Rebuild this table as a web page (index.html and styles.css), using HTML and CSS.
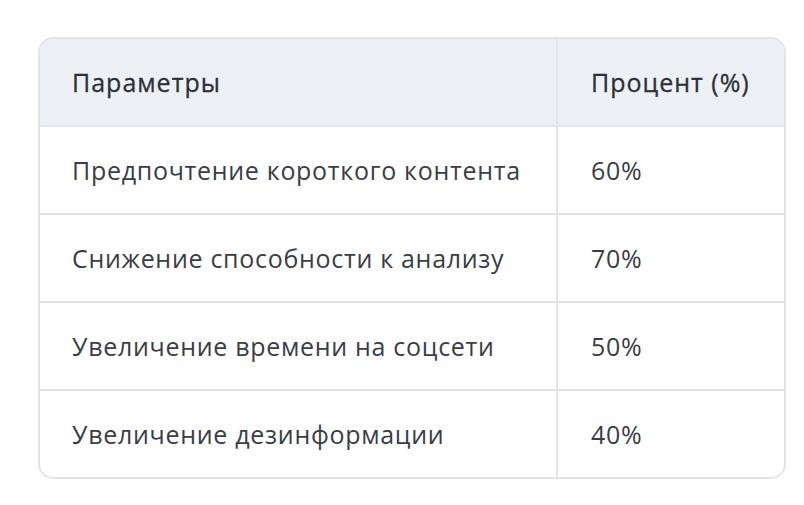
FILE: index.html
```html
<!DOCTYPE html>
<html lang="ru">
<head>
<meta charset="utf-8">
<link rel="stylesheet" href="styles.css">
</head>
<body>
<div class="wrap">
  <table class="tbl">
    <thead>
      <tr><th class="c1">Параметры</th><th class="c2">Процент (%)</th></tr>
    </thead>
    <tbody>
      <tr><td class="c1">Предпочтение короткого контента</td><td class="c2">60%</td></tr>
      <tr><td class="c1">Снижение способности к анализу</td><td class="c2">70%</td></tr>
      <tr><td class="c1">Увеличение времени на соцсети</td><td class="c2">50%</td></tr>
      <tr><td class="c1">Увеличение дезинформации</td><td class="c2">40%</td></tr>
    </tbody>
  </table>
</div>
</body>
</html>
```
FILE: styles.css
```css
html, body { margin: 0; padding: 0; background: #ffffff; }
body { font-family: "Open Sans", "Noto Sans", sans-serif; color: #3a3d44; }
.wrap { padding: 37px 19px 0 38px; }
.tbl {
  width: 748px;
  border-collapse: separate;
  border-spacing: 0;
  border: 2px solid #e1e5ea;
  border-radius: 15px;
  overflow: hidden;
  font-size: 25px;
  letter-spacing: 0.7px;
}
.tbl th, .tbl td {
  height: 88px;
  padding: 0 0 0 32px;
  text-align: left;
  vertical-align: middle;
  box-sizing: border-box;
}
.tbl th {
  height: 86px;
  background: #edf0f5;
  font-weight: 500;
  letter-spacing: 1px;
  color: #2c3037;
  -webkit-text-stroke: 0.3px #2c3037;
}
.tbl td { font-weight: 400; border-top: 2px solid #e1e5ea; }
.tbl .c1 { width: 518px; border-right: 2px solid #e1e5ea; }
.tbl .c2 { padding-left: 33px; }
```
